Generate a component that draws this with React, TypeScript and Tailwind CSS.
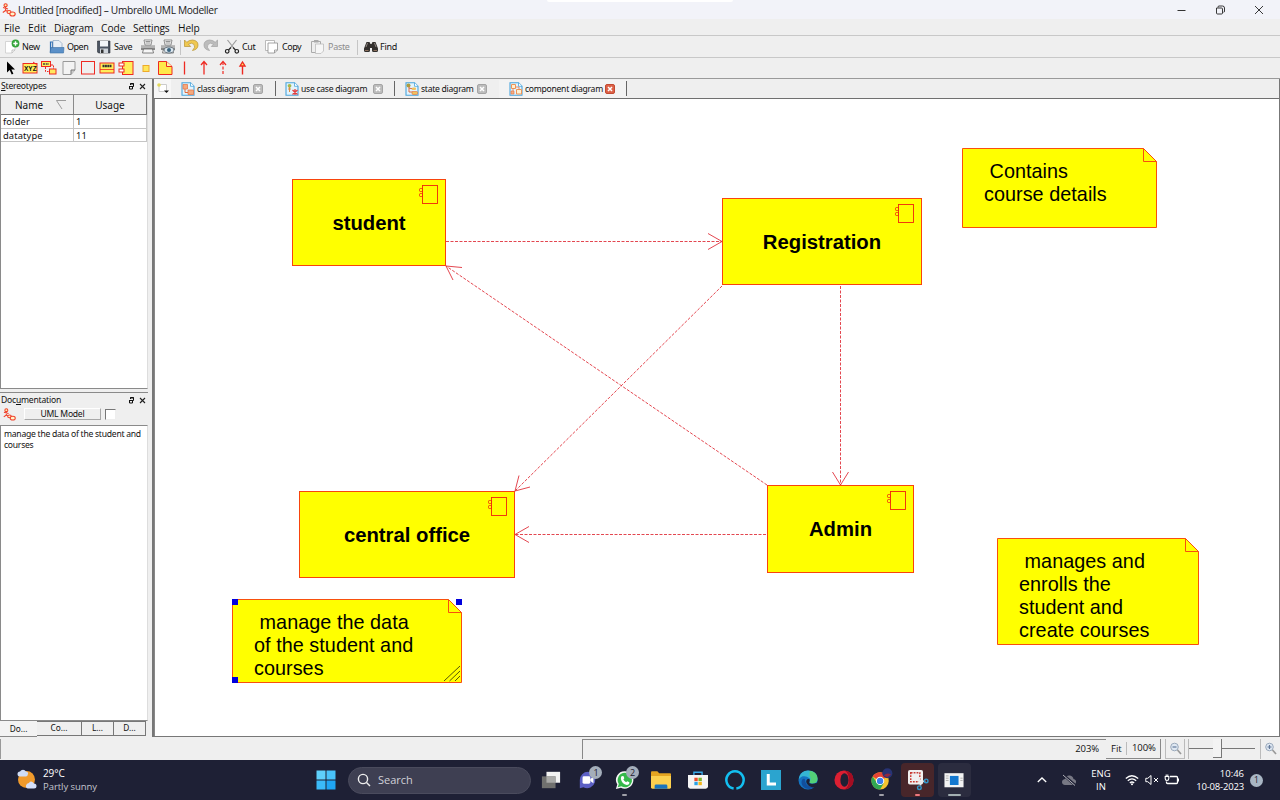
import React from "react";

const UI = "font-['Open_Sans','Noto_Sans',sans-serif]";
const TAHOMA = "font-['Noto_Sans','Open_Sans',sans-serif]";

function Svg({ w = 16, h = 16, vb, children, className = "" }: { w?: number; h?: number; vb?: string; children: React.ReactNode; className?: string }) {
  return (
    <svg width={w} height={h} viewBox={vb ?? `0 0 ${w} ${h}`} className={`block shrink-0 ${className}`} fill="none">
      {children}
    </svg>
  );
}

function AppLogo({ size = 14 }: { size?: number }) {
  return (
    <Svg w={size} h={size} vb="0 0 14 14">
      <g stroke="#f0402a" strokeWidth="1.1">
        <circle cx="3.6" cy="2.3" r="1.6" fill="#ffe9a8" />
        <path d="M3.600 4V7.500M1 4.500l5 1.500M3.600 7.500L.8 9.500M3.600 7.500l3 1" />
        <ellipse cx="7" cy="9" rx="2" ry="1.500" fill="#fff3c8" />
        <ellipse cx="10.500" cy="11" rx="2.700" ry="2" fill="#fff3c8" />
      </g>
    </Svg>
  );
}

function TitleBar() {
  return (
    <div className="flex h-[19px] items-center bg-[#f2f3f9] pl-[2px]">
      <AppLogo />
      <span className="ml-[2px] w-[204px] pt-[2px] text-[10.2px] tracking-[-0.33px] text-[#1a1a1a]">Untitled [modified] – Umbrello UML Modeller</span>
      <div className="ml-[325px] h-[2px] w-[186px] self-start rounded-b bg-white" />
      <div className="flex-1" />
      <div className="flex items-center gap-[29px] pr-[16px]">
        <Svg w={9} h={10}><path d="M.500 5.500h8" stroke="#333" /></Svg>
        <Svg w={10} h={10}><path d="M3 2.500V2q0-1 1-1h3.500q2 0 2 2v3q0 1.300-1 1.300M1.500 3h5q1 0 1 1v4q0 1-1 1h-4q-1 0-1-1z" stroke="#222" strokeWidth=".9" /></Svg>
        <Svg w={10} h={10}><path d="M1 1l8 8M9 1l-8 8" stroke="#222" strokeWidth=".9" /></Svg>
      </div>
    </div>
  );
}

function MenuBar() {
  return (
    <div className="flex h-[17px] items-center border-b border-[#c8c8c8] bg-[#efefef] pt-[3px] text-[10.2px] text-[#111]">
      <span className="w-[24px] pl-[4px]">File</span>
      <span className="w-[26px] pl-[4px]">Edit</span>
      <span className="w-[47px] pl-[4px] tracking-[-0.15px]">Diagram</span>
      <span className="w-[33px] pl-[4px]">Code</span>
      <span className="w-[44px] pl-[3px] tracking-[-0.15px]">Settings</span>
      <span className="pl-[4px] tracking-[-0.1px]">Help</span>
    </div>
  );
}

const printer = (
  <>
    <path d="M4 1h8l-1 5H5z" fill="#fff" stroke="#777" strokeWidth=".8" />
    <path d="M5.500 2.500h5M5.500 4h5" stroke="#777" strokeWidth=".8" />
    <path d="M1 6.500h14v4.500H1z" fill="#888" />
    <path d="M1 8h14" stroke="#ddd" />
    <path d="M3.500 10h9l1 4h-11z" fill="#f6f6f6" stroke="#666" strokeWidth=".8" />
  </>
);

function MainToolbar() {
  return (
    <div className={`flex h-[22px] items-center border-b border-[#c8c8c8] bg-[#efefef] pt-px text-[9px] tracking-[-0.35px] text-[#111] ${TAHOMA}`}>
      <div className="flex w-[44px] items-center pl-[4px]">
        <Svg w={16}><path d="M1.500 2.500h9.500V11l-3 3H1.500z" fill="#fff" stroke="#ccc" strokeWidth=".8" /><path d="M8 14v-3h3" stroke="#aaa" strokeWidth=".7" /><circle cx="11.500" cy="4.500" r="3.900" fill="#35a53c" /><path d="M11.500 2.300v4.400M9.300 4.500h4.400" stroke="#fff" strokeWidth="1.400" /></Svg>
        <span className="ml-[2px]">New</span>
      </div>
      <div className="flex w-[48px] items-center pl-[5px]">
        <Svg w={16}><path d="M1.500 13V3h2v9" stroke="#2e6fb5" strokeWidth="1.200" /><path d="M4 1.500h6l3 3V10H4z" fill="#e9eff6" stroke="#8aa5c0" strokeWidth=".7" /><path d="M1 14l1-5.500h13l-.500 5.500z" fill="#5b90c8" stroke="#3b6ea5" strokeWidth=".6" /></Svg>
        <span className="ml-[2px] tracking-[-0.5px]">Open</span>
      </div>
      <div className="flex w-[48px] items-center pl-[4px]">
        <Svg w={16}><path d="M1.500 2h12.500v12H2.500l-1-1z" fill="#4d5562" stroke="#2b3038" strokeWidth=".6" /><path d="M4 2h8v5.500H4z" fill="#f3f5f8" /><path d="M4 9.500h8V14H4z" fill="#cfd4da" /><path d="M5 10.500h2.500V14H5z" fill="#333" /></Svg>
        <span className="ml-[2px]">Save</span>
      </div>
      <div className="flex w-[40px] items-center gap-[4px]">
        <Svg w={16}>{printer}</Svg>
        <Svg w={16}>{printer}<ellipse cx="9" cy="11" rx="5" ry="3" fill="#dbe6ee" stroke="#56636f" strokeWidth=".8" /><circle cx="9" cy="11" r="2" fill="#39647f" /></Svg>
      </div>
      <div className="h-[15px] w-px bg-[#c5c5c5]" />
      <div className="flex w-[43px] items-center gap-[4px] pl-[2px]">
        <Svg w={16}><path d="M1.500 1v6.500h6.200L5.500 5.200Q9 3 11 5.500t-1.500 6Q15 10.500 15 6T9.500 1Q6 1 3.800 3.300z" fill="#f0c850" stroke="#b89433" strokeWidth=".7" /></Svg>
        <Svg w={16}><path d="M14.500 1v6.500H8.300l2.200-2.300Q7 3 5 5.500t1.500 6Q1 10.500 1 6t5.500-5q3.500 0 5.700 2.300z" fill="#bcbcbc" stroke="#a2a2a2" strokeWidth=".7" /></Svg>
      </div>
      <div className="flex w-[40px] items-center">
        <Svg w={16}><path d="M3.500 1l7 9M12.500 1l-7 9" stroke="#9b9b9b" strokeWidth="1.200" /><path d="M7 8.500L4.500 11M9 8.500l2.500 2.500" stroke="#333" strokeWidth="1.300" /><circle cx="3.200" cy="12.300" r="1.800" stroke="#222" strokeWidth="1.200" /><circle cx="12.800" cy="12.300" r="1.800" stroke="#222" strokeWidth="1.200" /></Svg>
        <span className="ml-[2px]">Cut</span>
      </div>
      <div className="flex w-[46px] items-center">
        <Svg w={16}><path d="M1.500 1.500h9v10h-9z" fill="#fff" stroke="#aaa" strokeWidth=".8" /><path d="M4 4h9.500v7l-3 3H4z" fill="#fff" stroke="#8d8d8d" strokeWidth=".8" /><path d="M10.500 14v-3h3" stroke="#8d8d8d" strokeWidth=".8" /></Svg>
        <span className="ml-[2px] tracking-[-0.5px]">Copy</span>
      </div>
      <div className="flex w-[46px] items-center text-[#8d8d8d]">
        <Svg w={16}><path d="M1.500 2.500h9v11h-9z" fill="#eee" stroke="#aaa" /><path d="M4 1h4.500v2.500H4z" fill="#aaa" /><path d="M5.500 5h8v7l-2.500 2.500H5.500z" fill="#f6f6f6" stroke="#bbb" strokeWidth=".8" /></Svg>
        <span className="ml-[2px] tracking-[-0.3px]">Paste</span>
      </div>
      <div className="ml-[1px] h-[15px] w-px bg-[#c5c5c5]" />
      <div className="flex items-center pl-[5px]">
        <Svg w={16}><path d="M3.500 3h3l1 2h1l1-2h3l2.500 6.500v2q0 1.500-1.500 1.500h-3Q9 13 9 11.500V9H7v2.500Q7 13 5.500 13h-3Q1 13 1 11.500v-2z" fill="#33302e" /><path d="M4.500 4L3 8M11.500 4L13 8" stroke="#8d8580" /><path d="M2 11.500h3.500M10.500 11.500H14" stroke="#8d705c" /></Svg>
        <span className="ml-[1px] tracking-[-0.25px]">Find</span>
      </div>
    </div>
  );
}

const R = "#ee2a22";
const toolIcons: React.ReactNode[] = [
  <path d="M4 1.500v11l2.700-2.500 2 4.500 1.700-.8-2-4.200H12z" fill="#000" />,
  <><rect x="1" y="3.500" width="14" height="9.500" fill="#ffee5a" stroke={R} /><path d="M11 2l3.500 2.500" stroke={R} /><text x="2" y="10.800" fontSize="6.500" fontWeight="700" fill="#111" className="font-['Liberation_Sans',sans-serif]">XYZ</text></>,
  <><rect x=".500" y="1.500" width="9" height="5" fill="#ffee5a" stroke={R} /><path d="M2 4h6" stroke="#444" strokeWidth="1.500" strokeDasharray="2 .700" /><path d="M10 5h2.500v4M4.500 7v4.500h3" stroke={R} strokeDasharray="2 1" /><rect x="8.500" y="9" width="6.500" height="5" fill="#ffe75e" stroke={R} /></>,
  <><path d="M2 1.500h12v8.500l-4 4.500H2z" fill="#f3f3f3" stroke="#999" /><path d="M10 14.500V10h4" fill="#ccc" stroke="#777" /></>,
  <rect x="1.500" y="1.500" width="13" height="12.500" stroke={R} />,
  <><rect x="1" y="3" width="14" height="10" fill="#ffee5a" stroke={R} /><path d="M3.500 6h9" stroke="#333" strokeWidth="2.500" strokeDasharray="2 .400" /><path d="M1 9.500h14" stroke={R} strokeWidth=".8" /></>,
  <><rect x="4.500" y="1.500" width="10.500" height="13" fill="#ffee5a" stroke={R} /><rect x="1" y="3" width="5" height="3" fill="#fff" stroke={R} /><rect x="1" y="9" width="5" height="3" fill="#fff" stroke={R} /></>,
  <rect x="5" y="5.500" width="6" height="6" fill="#ffe75a" stroke="#eeaa2a" />,
  <><path d="M1.500 1.500H9.500l5.500 5v8H1.500z" fill="#ffe84a" stroke={R} /><path d="M9.500 1.500v5H15" fill="#fff3a0" stroke={R} /></>,
  <path d="M8.500 1.500v13" stroke={R} strokeWidth="1.300" />,
  <path d="M8 2v12.500M5 5l3-3.500L11 5" stroke={R} strokeWidth="1.300" />,
  <><path d="M8 2v13" stroke={R} strokeDasharray="3 1.500" strokeWidth="1.200" /><path d="M5 5l3-3.500L11 5" stroke={R} strokeWidth="1.200" /></>,
  <path d="M8.500 6v8.500M6 6l2.500-4L11 6z" fill="#ffe75e" stroke={R} strokeWidth="1.400" />,
];

function DiagramToolbar() {
  return (
    <div className="flex h-[21px] items-center border-b border-[#9a9a9a] bg-[#efefef] pl-[1px]">
      {toolIcons.map((icon, i) => (
        <div key={i} className="flex w-[19.3px] justify-center">
          <Svg w={16}>{icon}</Svg>
        </div>
      ))}
    </div>
  );
}

function DockHeader({ children, className = "" }: { children: React.ReactNode; className?: string }) {
  return (
    <div className={`flex items-center pl-[1px] text-[8.6px] ${className}`}>
      <span className="tracking-[-0.22px]">{children}</span>
      <div className="flex-1" />
      <Svg w={7} h={7}><path d="M2.500 2V.500h3v3H4.500" stroke="#111" /><path d="M2 1h4" stroke="#111" /><path d="M1.500 3.500h3v2.500h-3z" stroke="#111" /><path d="M1 3.500h4" stroke="#111" /></Svg>
      <Svg w={7} h={7} className="ml-[4px] mr-[2px]"><path d="M1 1l5 5M6 1L1 6" stroke="#222" strokeWidth="1.100" /></Svg>
    </div>
  );
}

function StereotypeDock() {
  const rows = [["folder", "1"], ["datatype", "11"]];
  return (
    <div className="flex h-[310px] flex-col">
      <DockHeader className="h-[15px]"><u>S</u>tereotypes</DockHeader>
      <div className="flex-1 border border-[#8a8a8a] border-r-[#ddd] bg-white">
        <div className="flex h-[20px] border-b border-[#777] bg-[#efefef] text-[10px]">
          <div className="flex w-[73px] items-center border-r border-[#8a8a8a] pl-[14px] pt-px">
            Name
            <Svg w={11} h={10} className="ml-[13px]"><path d="M10 .500H.500L6 9" stroke="#888" strokeWidth=".8" /></Svg>
          </div>
          <div className="flex w-[73px] items-center justify-center border-r border-[#777] pt-px">Usage</div>
        </div>
        {rows.map(([n, u]) => (
          <div key={n} className="flex h-[13.500px] border-b border-[#c5c5c5] text-[9.300px] leading-[13px] tracking-[0.15px]">
            <div className="w-[73px] border-r border-[#c5c5c5] pl-[2px]">{n}</div>
            <div className="w-[73px] border-r border-[#c5c5c5] pl-[2px]">{u}</div>
          </div>
        ))}
      </div>
    </div>
  );
}

function DocumentationDock() {
  const tabs = [["Co...", "w-[45px]"], ["L...", "w-[32px]"], ["D...", "w-[32px]"]];
  return (
    <div className="mt-[3px] flex flex-1 flex-col border-t border-[#8a8a8a]">
      <DockHeader className="h-[14px]">Doc<u>u</u>mentation</DockHeader>
      <div className="flex h-[14px] items-center pl-[3px] text-[8.600px]">
        <AppLogo size={13} />
        <div className="ml-[8px] flex h-[12px] w-[77px] items-center justify-center border border-[#a8a8a8] border-l-white border-t-white tracking-[-0.25px]">UML Model</div>
        <div className="ml-[4px] h-[11px] w-[11px] border border-b-[#eee] border-l-[#777] border-r-[#eee] border-t-[#777] bg-white" />
      </div>
      <div className="mt-[4px] flex-1 border border-[#8a8a8a] border-r-[#ddd] bg-white pl-[3px] pt-[3px] text-[8.600px] leading-[10.500px] tracking-[-0.26px]">
        manage the data of the student and<br />courses
      </div>
      <div className="flex h-[16px] items-start text-[8.300px]">
        <div className="flex h-[16px] w-[37px] items-center justify-center border-b border-[#888] bg-[#f3f3f3] pt-px">Do...</div>
        {tabs.map(([t, w]) => (
          <div key={t} className={`flex h-[15px] items-center justify-center border border-l-0 border-[#777] ${w}`}>{t}</div>
        ))}
      </div>
    </div>
  );
}

function DiagramIcon({ kind }: { kind: number }) {
  return (
    <Svg w={14} h={14}>
      <path d="M1 .800h8.500l3.500 3.500v9H1z" fill="#e3f4fd" stroke="#4aa5dc" strokeWidth="1.100" />
      <path d="M9.500.800v3.500H13" fill="#fff" stroke="#4aa5dc" strokeWidth=".8" />
      {kind === 0 && <><path d="M2 2.500h4.500v4.500H2zM7 8h5.500v4.500H7z" fill="#f5a97c" stroke="#e57a4e" strokeWidth=".8" /><path d="M4 7v3.500h3" stroke="#e06a3a" /></>}
      {kind === 1 && <><circle cx="4.500" cy="3.800" r="1.900" fill="#a6b94c" /><path d="M4.500 5v5M3 7h3" stroke="#db8c42" /><path d="M7.500 8l5 4.500M12.500 8l-5 4.500M10 7v6" stroke="#e33e3e" strokeWidth="1.300" /></>}
      {kind === 2 && <><circle cx="3.500" cy="3.500" r="2" fill="#ac9c3f" /><path d="M4 5v5h4M4 6l4 1" stroke="#db6a42" /><rect x="7" y="5.500" width="4" height="2.500" rx="1" fill="#f1c35c" /><rect x="7" y="9.500" width="5.500" height="3" rx="1" fill="#f1c35c" stroke="#e06a3a" strokeWidth=".6" /></>}
      {kind === 3 && <><path d="M2.500 2.500h4v4h-4zM7.500 7.500h5V12h-5z" fill="#fff0d0" stroke="#ee9458" strokeWidth="1" /><path d="M2 9h3v3H2z" fill="#f5b183" stroke="#e57a4e" strokeWidth=".7" /><path d="M4 6.500V9M6.500 5H10v2.500" stroke="#e57a4e" strokeWidth=".8" /></>}
    </Svg>
  );
}

function CloseBox({ active = false }: { active?: boolean }) {
  return (
    <Svg w={10} h={10}>
      <rect x=".5" y=".5" width="9" height="9" rx="1.500" fill={active ? "#dd6248" : "#bdbdbd"} stroke={active ? "#c24a32" : "#a4a4a4"} />
      <path d="M3 3l4 4M7 3L3 7" stroke="#fff" strokeWidth="1.500" />
    </Svg>
  );
}

function TabBar() {
  const tabs = [
    { t: "class diagram", cls: "w-[105px] pl-[10px]", tw: "w-[56px]", sep: true },
    { t: "use case diagram", cls: "w-[119px] pl-[9px]", tw: "w-[72px]", sep: true },
    { t: "state diagram", cls: "w-[104px] pl-[10px]", tw: "w-[56px]", sep: false },
    { t: "component diagram", cls: "w-[128px] pl-[10px] bg-[#f3f3f3]", tw: "w-[80px]", sep: true },
  ];
  return (
    <div className="flex h-[20px] items-center border-b border-[#6f6f6f] text-[8.600px]">
      <div className="flex h-full w-[17px] items-center justify-center bg-[#f7f7f7]">
        <Svg w={14} h={14}><path d="M3 2.500h7.500v7H3z" fill="#fff" stroke="#ccc" /><circle cx="3" cy="3" r="1.800" fill="#e3d95b" /><path d="M8 8.500h5L10.500 11z" fill="#111" /></Svg>
      </div>
      {tabs.map((x, i) => (
        <div key={x.t} className={`flex h-[18px] items-center ${x.cls}`}>
          <DiagramIcon kind={i} />
          <span className={`ml-[2px] whitespace-nowrap pt-px tracking-[-0.27px] ${x.tw}`}>{x.t}</span>
          <CloseBox active={i === 3} />
          {x.sep && <div className="ml-auto h-[15px] w-px bg-[#666]" />}
        </div>
      ))}
    </div>
  );
}

function ComponentNode({ name, cls }: { name: string; cls: string }) {
  return (
    <div className={`absolute flex items-center justify-center border border-[#f8440c] bg-[#ffff00] ${cls}`}>
      <span className="whitespace-nowrap pt-px font-['Liberation_Sans',Arial,sans-serif] text-[20.300px] font-bold leading-none text-black">{name}</span>
      <svg width="20" height="20" viewBox="0 0 20 20" fill="none" stroke="#f0260c" className="absolute right-[6px] top-[5px]">
        <rect x="3.500" y=".500" width="15" height="18" strokeWidth=".9" />
        <rect x=".500" y="3.500" width="3" height="3" rx="1" strokeWidth=".9" />
        <rect x=".500" y="8.500" width="3" height="3" rx="1" strokeWidth=".9" />
      </svg>
    </div>
  );
}

function Note({ lines, w, h, cls, selected = false }: { lines: string[]; w: number; h: number; cls: string; selected?: boolean }) {
  return (
    <div className={`absolute ${cls}`}>
      <svg width={w} height={h} className="absolute left-0 top-0 block overflow-visible" fill="none" stroke="#f8500c">
        <path d={`M.5 .5H${w - 13.5}L${w - 0.5} 13.5V${h - 0.5}H.5Z`} fill="#ffff00" />
        <path d={`M${w - 13.5} .5V13.5H${w - 0.5}`} />
        {selected && (
          <>
            <path d={`M${w - 18} ${h - 2}L${w - 2} ${h - 17}M${w - 12.500} ${h - 2}L${w - 2} ${h - 12}M${w - 7} ${h - 2}L${w - 2} ${h - 7}`} stroke="#55550a" />
            <path d={`M0 0h6v6H0zM${w - 6} 0h6v6h-6zM0 ${h - 6}h6v6H0z`} fill="#0000dd" stroke="none" />
          </>
        )}
      </svg>
      <div className="relative whitespace-pre pl-[22px] pt-[11.500px] font-['Liberation_Sans',Arial,sans-serif] text-[19.800px] leading-[23px] tracking-[0.05px] text-black">
        {lines.join("\n")}
      </div>
    </div>
  );
}

function Canvas() {
  return (
    <div className="relative flex-1 overflow-hidden border-l border-[#888] bg-white">
      <ComponentNode name="student" cls="left-[137px] top-[80px] w-[154px] h-[87px]" />
      <ComponentNode name="Registration" cls="left-[567px] top-[99px] w-[200px] h-[87px]" />
      <ComponentNode name="central office" cls="left-[144px] top-[392px] w-[216px] h-[87px]" />
      <ComponentNode name="Admin" cls="left-[612px] top-[386px] w-[147px] h-[88px]" />
      <Note w={195} h={80} cls="left-[807px] top-[49px] w-[195px] h-[80px]" lines={[" Contains", "course details"]} />
      <Note w={202} h={107} cls="left-[842px] top-[439px] w-[202px] h-[107px]" lines={[" manages and", "enrolls the", "student and", "create courses"]} />
      <Note w={230} h={84} selected cls="left-[77px] top-[500px] w-[230px] h-[84px]" lines={[" manage the data", "of the student and", "courses"]} />
      <svg width="1124" height="637" viewBox="155 99 1124 637" className="absolute left-0 top-0" fill="none" stroke="#e0323c">
        <g strokeDasharray="3 1.500" strokeWidth=".9">
          <path d="M446 241.500H722" />
          <path d="M840.500 286V485" />
          <path d="M766 534.500H515" />
          <path d="M722 286L515 491" />
          <path d="M767 485L446 266" />
        </g>
        <g strokeWidth=".9">
          <path d="M708 233.500L722 241.500L708 249.500" />
          <path d="M832.500 472L840.500 485L848.500 472" />
          <path d="M529 526.500L515 534.500L529 542.500" />
          <path d="M519 475.500L515 491L530 487" />
          <path d="M453 280L446 266L462 267.500" />
        </g>
      </svg>
    </div>
  );
}

function StatusBar() {
  return (
    <div className="flex h-[23px] items-center bg-[#efefef] text-[9.500px] text-[#111]">
      <div className="h-[20px] w-[582px] border-l border-[#999]" />
      <div className="flex h-[20px] flex-1 items-center justify-end border-l border-t border-[#888] pr-[7px]"><span className="tracking-[-0.1px]">203%</span></div>
      <div className="flex h-[20px] w-[55px] items-center border-b border-r border-[#888]">
        <span className="w-[21px] border-r border-[#bbb] pl-[5px] leading-[13px]">Fit</span>
        <span className="pl-[5px] tracking-[-0.1px]">100%</span>
      </div>
      <div className="ml-[4px] flex h-[20px] w-[20px] items-center justify-center border-b border-l border-r border-[#bbb]">
        <Svg w={13} h={13}><circle cx="5.500" cy="5" r="3.800" fill="#dfe8f2" stroke="#9aa9bb" /><path d="M3.500 5h4" stroke="#63799a" strokeWidth="1.200" /><path d="M8.500 8l3.500 4" stroke="#999" strokeWidth="1.700" /></Svg>
      </div>
      <div className="ml-[3px] flex h-[20px] w-[72px] items-center border-l border-[#bbb]">
        <div className="h-px w-[24px] bg-[#777]" />
        <div className="h-[19px] w-[9px] border-b border-r border-[#777] bg-[#f3f3f3]" />
        <div className="h-px w-[33px] bg-[#777]" />
      </div>
      <div className="flex h-[20px] w-[20px] items-center justify-center border-l border-[#bbb]">
        <Svg w={13} h={13}><circle cx="5.500" cy="5" r="3.800" fill="#dfe8f2" stroke="#9aa9bb" /><path d="M3.500 5h4M5.500 3v4" stroke="#63799a" strokeWidth="1.200" /><path d="M8.500 8l3.500 4" stroke="#999" strokeWidth="1.700" /></Svg>
      </div>
    </div>
  );
}

const apps: { icon: React.ReactNode; run?: string; bg?: string; badge?: string }[] = [
  { icon: <><path d="M6 2h15v12H6z" fill="#f2f2f2" /><path d="M1 7h15v13H1z" fill="#70706e" /><path d="M6 7h10v7H6z" fill="#a9a9a7" /></> },
  { icon: <><path d="M11 2a9 9 0 11-5 17l-4 1V11a9 9 0 019-9z" fill="#5b5fc4" /><rect x="5" y="7" width="8.500" height="8" rx="1.500" fill="#fff" /><path d="M13.500 10L17 7.500v7L13.500 12z" fill="#fff" /></>, badge: "1" },
  { icon: <><path d="M11 1.500a9.500 9.500 0 11-4.500 18L1 21l1.500-5A9.500 9.500 0 0111 1.500z" fill="#f5f5f5" /><path d="M11 3a8 8 0 11-4 15l-4 1 1.200-3.700A8 8 0 0111 3z" fill="#35b84b" /><path d="M7.500 6.500l2 .3.700 2.400-1 1.200q1 2 3 3l1.300-1 2.300 1q.2 3-2.800 3Q7.500 15.500 6.500 10q-.2-2.500 1-3.500z" fill="#fff" /></>, badge: "2", run: "w-[5px] bg-[#a0a0a8]" },
  { icon: <><path d="M0 3q0-1.500 1-1.500h6l2 2h12q1 0 1 1V10H0z" fill="#e5a521" /><path d="M0 6.500h22v12.500q0 1.500-1.500 1.500h-19Q0 20.500 0 19z" fill="#fcd14f" /><path d="M4 20.500V17.500q0-1.500 1.500-1.500h11q1.500 0 1.500 1.500v3z" fill="#1975bd" /></> },
  { icon: <><path d="M6.500 6V2.500h9V6" stroke="#38a9e8" strokeWidth="1.500" /><path d="M0 5.500h22v12.500q0 2.500-2.500 2.500h-17Q0 20.500 0 18z" fill="#f5f5f5" /><path d="M7 8.500h3.700v3.700H7z" fill="#ee4b2b" /><path d="M11.500 8.500h3.700v3.700h-3.700z" fill="#7bb52a" /><path d="M7 13h3.700v3.700H7z" fill="#29a3e8" /><path d="M11.500 13h3.700v3.700h-3.700z" fill="#f8b718" /></> },
  { icon: <path d="M9.500 20.300a9.500 9.500 0 113 0" stroke="#13bff0" strokeWidth="2.800" /> },
  { icon: <><path d="M0 0h22v22H0z" fill="#2ba4cf" /><path d="M8 4.500V15.500h8.500" stroke="#fff" strokeWidth="3.300" /></> },
  { icon: <><circle cx="11" cy="11" r="10.500" fill="#1473c2" /><path d="M1 9Q3 .500 11 .500q9.500 0 10.500 8.500 0 6-6 6-3.500-.3-2.500-2 1-2-.5-4Q9 6 5 7 2.500 8 1 10z" fill="#35b6d4" /><path d="M13 .800q8.500 1.500 8.500 9-.5 5-6 5-3.500-.3-2.500-2 2-4-.5-7z" fill="#5bd75f" fillOpacity=".8" /><path d="M7.500 10Q8 20 18.500 18q-4 4.500-10.500 2-5-3-4-8 1-3 3.500-2z" fill="#124f9d" /><path d="M12.500 9.500q.800 2 0 3.500-.800 2 2.500 2.200 3 .2 5.500-1.200L22 18q-4 2-8 .500Q9 16 9 12q.5-2.500 3.500-2.500z" fill="#1e2035" /></> },
  { icon: <><circle cx="11" cy="11" r="10.500" fill="#dc1f32" /><ellipse cx="11.500" cy="11" rx="4.500" ry="7.500" fill="#1f2034" /><path d="M11.500.500q10 1.500 10 10.500t-10 10.500q5-3 5-10.500t-5-10.500z" fill="#a40d22" /></> },
  { icon: <><circle cx="10" cy="12" r="9.500" fill="#f5c431" /><path d="M10 12L1.800 7.200A9.500 9.500 0 0118.200 7.200z" fill="#e64434" /><path d="M1.800 7.200A9.500 9.500 0 0010 21.500l4-7-7.500-.5z" fill="#32a853" /><circle cx="10" cy="12" r="4.600" fill="#fff" /><circle cx="10" cy="12" r="3.500" fill="#3b7ded" /><circle cx="18" cy="3.500" r="5.500" fill="#283374" className="origin-center" /><path d="M14 6q4-4 8-1l-4 3z" fill="#8f2840" /></>, run: "w-[5px] bg-[#a0a0a8]" },
  { icon: <><rect x="0" y="0" width="16.500" height="16" rx="2" fill="#f0f0f0" /><rect x="3" y="3" width="10" height="10" stroke="#c83c34" strokeWidth="1.600" strokeDasharray="2 1.200" /><path d="M12 8l2 9M11 14l8-2" stroke="#e9e9e9" strokeWidth="1.800" /><circle cx="12.500" cy="19.500" r="2" stroke="#3097cb" strokeWidth="1.500" /><circle cx="20" cy="12" r="2" stroke="#3097cb" strokeWidth="1.500" /></>, bg: "bg-[#48262a]", run: "w-[5px] bg-[#f0787e]" },
  { icon: <><path d="M.500 3.500h21v15.500H.500z" fill="#f3f3f3" /><path d="M2 6.500h3M2 9h3M2 11.500h3M18 9h2.500M18 11.500h2.500" stroke="#aaa" /><path d="M6.500 6.500h9.500v10H6.500z" fill="#1478d0" /></>, bg: "bg-[#2b2c3f]", run: "w-[13px] bg-[#a3afb2]" },
];

function Taskbar() {
  return (
    <div className="flex h-[40px] items-center bg-[#1e2035] text-white">
      <div className="flex w-[316px] items-center pl-[16px]">
        <Svg w={22} h={22}>
          <circle cx="10.500" cy="10.500" r="8.500" fill="#f09a2c" />
          <path d="M4 7.500a2.500 2.500 0 010-5 3.500 3.500 0 016 0q2.500 0 2 2.500-.5 2.500-2 2.500z" fill="#cfdcf6" />
          <path d="M12 19.500q-2.500-.5-2-3t3-2.500q2-3 5 .5 2.500 0 2.500 2.500t-2.500 2.500z" fill="#d4dffa" />
        </Svg>
        <div className="ml-[5px] flex flex-col text-[10px] leading-[13px]">
          <span className="tracking-[-0.1px]">29°C</span>
          <span className="text-[9.500px] tracking-[-0.05px] text-[#c4c5ce]">Partly sunny</span>
        </div>
      </div>
      <Svg w={20} h={20}><path d="M.5.500h9v9h-9z" fill="#5fd0fb" /><path d="M10.500.500h9v9h-9z" fill="#49c3fa" /><path d="M.5 10.500h9v9h-9z" fill="#3bbaf8" /><path d="M10.500 10.500h9v9h-9z" fill="#1fa5f3" /></Svg>
      <div className="ml-[12px] flex h-[27px] w-[183px] items-center rounded-full border border-[#4a4b5d] bg-[#3e3f52] pl-[8px]">
        <Svg w={14} h={14}><circle cx="6" cy="6" r="4.600" stroke="#eee" strokeWidth="1.400" /><path d="M9.500 9.500l3.500 3.500" stroke="#eee" strokeWidth="1.400" /></Svg>
        <span className="ml-[7px] pt-px text-[11px] text-[#d0d0d8]">Search</span>
      </div>
      <div className="ml-[2px] flex">
        {apps.map((a, i) => (
          <div key={i} className="flex w-[36.650px] justify-center">
            <div className={`relative flex h-[34px] w-[33px] flex-col items-center rounded-[4px] pt-[7px] ${a.bg ?? ""}`}>
              <Svg w={20} h={20} vb="0 0 22 22" className="overflow-visible">{a.icon}</Svg>
              {a.run && <div className={`mt-[4px] h-[2px] rounded-full ${a.run}`} />}
              {a.badge && <div className="absolute left-[18px] top-[3px] flex h-[13px] w-[13px] items-center justify-center rounded-full bg-[#a4aebb] text-[9px] leading-none text-[#1d2030]">{a.badge}</div>}
            </div>
          </div>
        ))}
      </div>
      <div className="flex-1" />
      <Svg w={10} h={8}><path d="M.800 6L5 2l4.200 4" stroke="#fff" strokeWidth="1.300" /></Svg>
      <Svg w={16} h={14} className="ml-[14px]"><path d="M4 12q-3-.5-3-3t3-3q1-4 5-3.500 3 .5 3.500 3.500 3 .5 2.500 3.500-.5 2-3 2.500z" fill="#777884" /><path d="M3 2.500l11 9.500" stroke="#1e2035" strokeWidth="2.500" /><path d="M2 2l12 10.500" stroke="#b0b0b8" /></Svg>
      <div className="ml-[14px] w-[20px] text-center text-[9.500px] leading-[13px]">ENG<br />IN</div>
      <Svg w={14} h={12} className="ml-[14px]"><path d="M.800 4.500q6-5.500 12.400 0M2.800 6.800q4.200-3.800 8.400 0M4.800 9q2.200-2 4.400 0" stroke="#fff" strokeWidth="1.200" /><circle cx="7" cy="10.300" r="1" fill="#fff" /></Svg>
      <Svg w={14} h={12} className="ml-[6px]"><path d="M.800 4.300h2L6 1.500v9L2.800 7.700h-2zM9 4l4 4M13 4L9 8" stroke="#fff" /></Svg>
      <Svg w={15} h={12} className="ml-[5px]"><path d="M6 2.500h6.500q1 0 1 1v5q0 1-1 1H3.500q-1 0-1-1V7.500M14.500 4.500v3" stroke="#fff" strokeWidth="1.300" /><path d="M1.200 2v2.500q0 2 1.800 2t1.800-2V2M2.200.500V2M3.800.500V2M.800 2.500h4.500" stroke="#fff" strokeWidth="1.100" /></Svg>
      <div className="ml-[11px] w-[54px] text-right text-[9.500px] leading-[13px]">10:46<br /><span className="-ml-[3px] tracking-[-0.17px]">10-08-2023</span></div>
      <div className="ml-[6px] mr-[17px] flex h-[13px] w-[13px] items-center justify-center rounded-full bg-[#a9b6c4] text-[8.500px] leading-none text-[#1d2030]">1</div>
    </div>
  );
}

export default function App() {
  return (
    <div className={`flex h-[800px] w-[1280px] flex-col overflow-hidden whitespace-nowrap bg-[#efefef] text-[#111] ${UI}`}>
      <TitleBar />
      <MenuBar />
      <MainToolbar />
      <DiagramToolbar />
      <div className={`flex min-h-0 flex-1 ${TAHOMA}`}>
        <div className="flex w-[148px] flex-col">
          <StereotypeDock />
          <DocumentationDock />
        </div>
        <div className="ml-[4px] flex min-w-0 flex-1 flex-col border-b border-l-2 border-r border-[#777]">
          <TabBar />
          <Canvas />
        </div>
      </div>
      <StatusBar />
      <Taskbar />
    </div>
  );
}
